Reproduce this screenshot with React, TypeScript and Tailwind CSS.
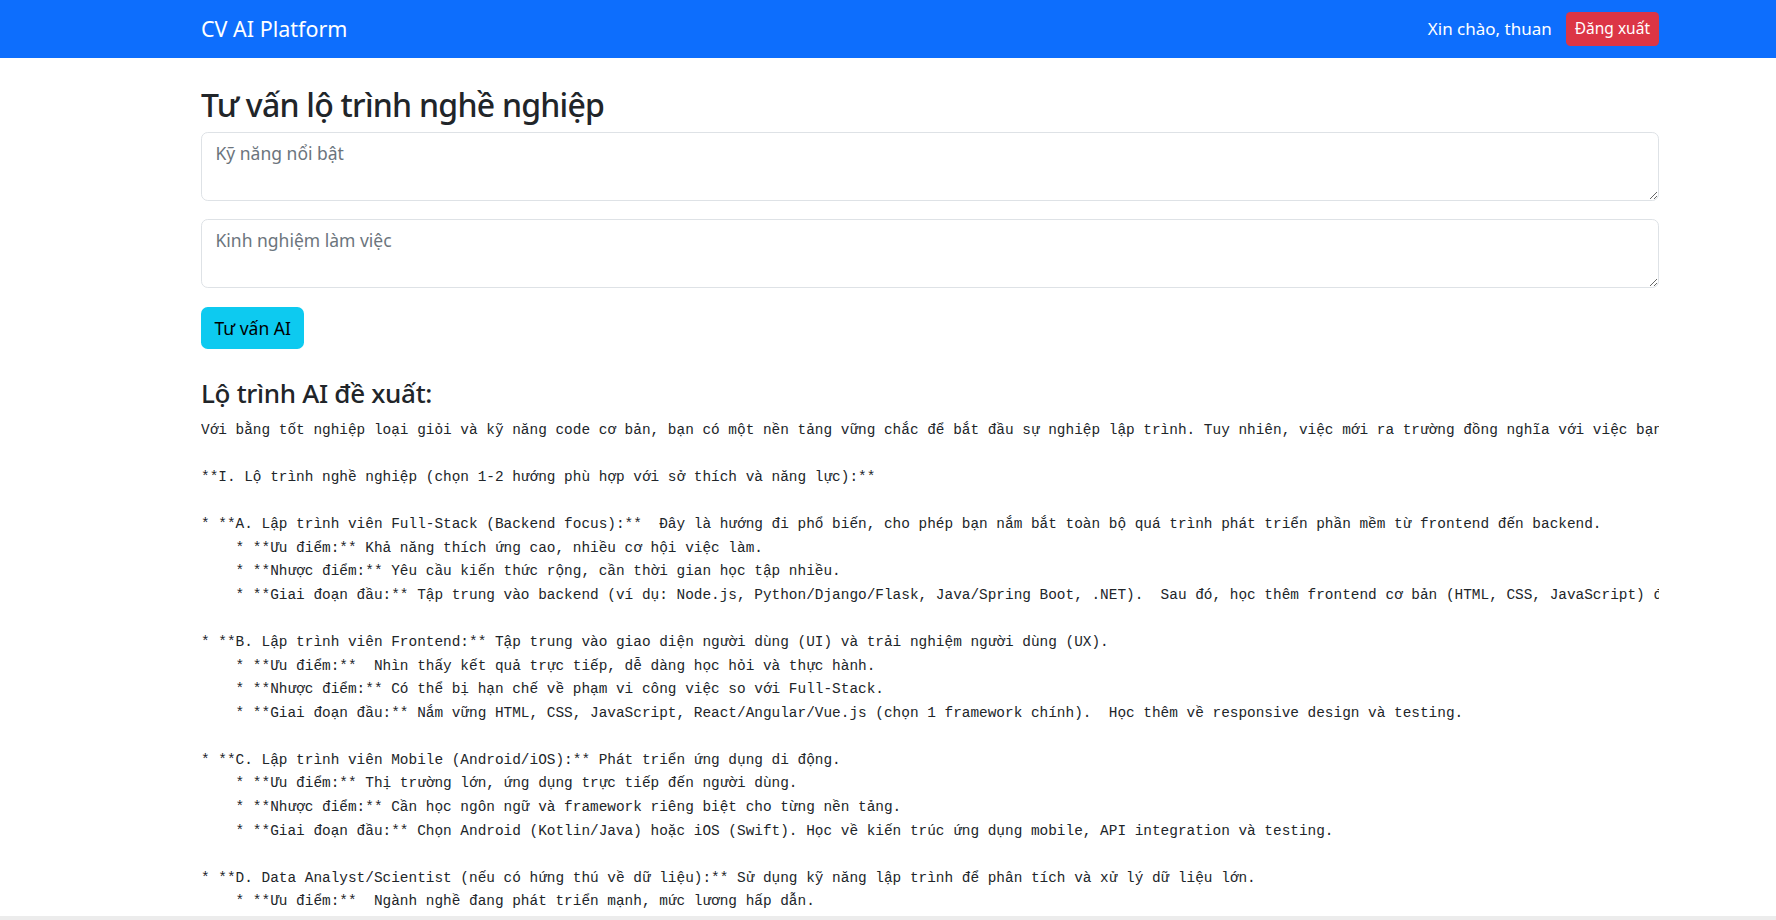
const advice = `Với bằng tốt nghiệp loại giỏi và kỹ năng code cơ bản, bạn có một nền tảng vững chắc để bắt đầu sự nghiệp lập trình. Tuy nhiên, việc mới ra trường đồng nghĩa với việc bạn cần tích lũy thêm kinh nghiệm thực tế.

**I. Lộ trình nghề nghiệp (chọn 1-2 hướng phù hợp với sở thích và năng lực):**

* **A. Lập trình viên Full-Stack (Backend focus):**  Đây là hướng đi phổ biến, cho phép bạn nắm bắt toàn bộ quá trình phát triển phần mềm từ frontend đến backend.
    * **Ưu điểm:** Khả năng thích ứng cao, nhiều cơ hội việc làm.
    * **Nhược điểm:** Yêu cầu kiến thức rộng, cần thời gian học tập nhiều.
    * **Giai đoạn đầu:** Tập trung vào backend (ví dụ: Node.js, Python/Django/Flask, Java/Spring Boot, .NET).  Sau đó, học thêm frontend cơ bản (HTML, CSS, JavaScript) để hoàn thiện kỹ năng.

* **B. Lập trình viên Frontend:** Tập trung vào giao diện người dùng (UI) và trải nghiệm người dùng (UX).
    * **Ưu điểm:**  Nhìn thấy kết quả trực tiếp, dễ dàng học hỏi và thực hành.
    * **Nhược điểm:** Có thể bị hạn chế về phạm vi công việc so với Full-Stack.
    * **Giai đoạn đầu:** Nắm vững HTML, CSS, JavaScript, React/Angular/Vue.js (chọn 1 framework chính).  Học thêm về responsive design và testing.

* **C. Lập trình viên Mobile (Android/iOS):** Phát triển ứng dụng di động.
    * **Ưu điểm:** Thị trường lớn, ứng dụng trực tiếp đến người dùng.
    * **Nhược điểm:** Cần học ngôn ngữ và framework riêng biệt cho từng nền tảng.
    * **Giai đoạn đầu:** Chọn Android (Kotlin/Java) hoặc iOS (Swift). Học về kiến trúc ứng dụng mobile, API integration và testing.

* **D. Data Analyst/Scientist (nếu có hứng thú về dữ liệu):** Sử dụng kỹ năng lập trình để phân tích và xử lý dữ liệu lớn.
    * **Ưu điểm:**  Ngành nghề đang phát triển mạnh, mức lương hấp dẫn.
    * **Nhược điểm:** Cần kiến thức về thống kê, toán học và các công cụ phân tích.
    * **Giai đoạn đầu:** Học Python (Pandas, NumPy), SQL và các công cụ trực quan hóa dữ liệu.`;

function Navbar() {
  return (
    <nav className="h-[58px] shrink-0 bg-[#0d6efd]">
      <div className="ml-[201px] flex h-full w-[1458px] items-center justify-between">
        <span className="text-[21.5px] text-white">CV AI Platform</span>
        <div className="flex items-center gap-[14px]">
          <span className="text-[17px] text-white">Xin chào, thuan</span>
          <button className="h-[34px] rounded-[4.5px] bg-[#dc3545] px-[9px] text-[15.5px] text-white">
            Đăng xuất
          </button>
        </div>
      </div>
    </nav>
  );
}

export default function App() {
  return (
    <div className="flex h-screen flex-col overflow-hidden bg-white text-[#212529] [font-family:'Noto_Sans','Open_Sans',sans-serif]">
      <Navbar />
      <main className="min-h-0 flex-1 overflow-hidden">
        <div className="ml-[201px] w-[1458px]">
          <h2 className="mt-[28px] mb-[8px] text-[32px] leading-[1.2] font-medium tracking-[-0.75px]">
            Tư vấn lộ trình nghề nghiệp
          </h2>
          <textarea
            rows={2}
            placeholder="Kỹ năng nổi bật"
            className="mb-[18px] block h-[69px] w-full rounded-[6.75px] border border-[#dee2e6] px-[13.5px] py-[6.75px] text-[17.5px] leading-[27px] placeholder:text-[#6c757d]"
          />
          <textarea
            rows={2}
            placeholder="Kinh nghiệm làm việc"
            className="block h-[69px] w-full rounded-[6.75px] border border-[#dee2e6] px-[13.5px] py-[6.75px] text-[17.5px] leading-[27px] placeholder:text-[#6c757d]"
          />
          <button className="mt-[19px] h-[42px] rounded-[6.75px] bg-[#0dcaf0] px-[13.5px] text-[17.5px] text-black">
            Tư vấn AI
          </button>
          <h4 className="mt-[29px] mb-[9px] text-[26px] leading-[1.2] font-medium tracking-[-0.3px]">
            Lộ trình AI đề xuất:
          </h4>
          <pre className="overflow-hidden text-[14.41px] leading-[23.6px] whitespace-pre [font-family:'Liberation_Mono','DejaVu_Sans_Mono',monospace]">
            {advice}
          </pre>
        </div>
      </main>
      <div className="h-[4px] shrink-0 bg-[#ececec]" />
    </div>
  );
}
